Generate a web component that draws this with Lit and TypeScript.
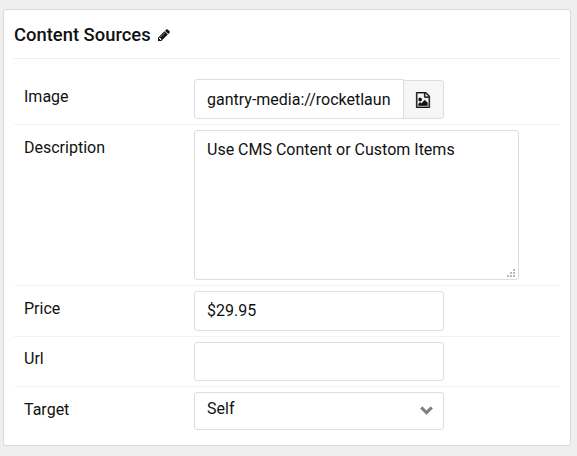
import { LitElement, html, css, svg } from "lit";
import { customElement } from "lit/decorators.js";

const pencil = svg`<path d="M491 1536l91-91-235-235-91 91v107h128v128h107zm523-928q0-22-22-22-10 0-17 7l-542 542q-7 7-7 17 0 22 22 22 10 0 17-7l542-542q7-7 7-17zm-54-192l416 416-832 832h-416v-416zm683 96q0 53-37 90l-166 166-416-416 166-165q36-38 90-38 53 0 91 38l235 234q37 39 37 91z"/>`;
const fileImage = svg`<path d="M1596 380q28 28 48 76t20 88v1152q0 40-28 68t-68 28h-1344q-40 0-68-28t-28-68v-1600q0-40 28-68t68-28h896q40 0 88 20t76 48zm-444-244v376h376q-10-29-22-41l-313-313q-12-12-41-22zm384 1528v-1024h-416q-40 0-68-28t-28-68v-416h-768v1536h1280zm-128-448v320h-1024v-192l192-192 128 128 384-384zm-832-192q-80 0-136-56t-56-136 56-136 136-56 136 56 56 136-56 136-136 56z"/>`;
const chevron = svg`<path d="M1683 808l-742 741q-19 19-45 19t-45-19l-742-741q-19-19-19-45.5t19-45.5l166-165q19-19 45-19t45 19l531 531 531-531q19-19 45-19t45 19l166 165q19 19 19 45.5t-19 45.5z"/>`;
const grip = svg`<path d="M6 0h2v2h-2zM3 3h2v2h-2zM6 3h2v2h-2zM0 6h2v2h-2zM3 6h2v2h-2zM6 6h2v2h-2z"/>`;

@customElement("app-root")
export class AppRoot extends LitElement {
  static styles = css`
    :host {
      display: block;
      box-sizing: border-box;
      height: 100vh;
      padding: 9px 6px 10px 3px;
      background: #efefef;
      color: #111;
      font: 16px/24px Roboto, sans-serif;
    }
    * { box-sizing: border-box; }
    .card {
      height: 437px;
      padding: 0 10px;
      background: #fff;
      border: 1px solid #d9d9d9;
      border-radius: 3px;
    }
    .title {
      display: flex;
      align-items: center;
      gap: 6px;
      height: 49px;
      margin: 0 0 15px;
      padding-top: 2px;
      border-bottom: 1px solid #eee;
      font-size: 18.4px;
      font-weight: 500;
    }
    svg { display: block; fill: currentColor; }
    .pencil { width: 14px; height: 14px; margin-top: -1px; }
    .row {
      display: flex;
      align-items: flex-start;
      padding: 5px 0 5px 10px;
      border-bottom: 1px solid #f2f2f2;
    }
    .row:last-child { border-bottom: 0; }
    .row label { width: 170px; padding-top: 6px; }
    .row .raised { padding-top: 5px; }
    .field {
      display: block;
      width: 250px;
      height: 40px;
      margin: 0;
      padding: 0 12px;
      border: 1px solid #ddd;
      border-radius: 3px;
      background: #fff;
      color: inherit;
      font: inherit;
      outline: 0;
    }
    .group { display: flex; align-items: flex-end; }
    .path { width: 210px; border-radius: 3px 0 0 3px; }
    .price { padding-bottom: 2px; }
    .pick {
      display: flex;
      align-items: center;
      justify-content: center;
      width: 41px;
      height: 39px;
      margin-left: -1px;
      padding: 0 2px 0 0;
      border: 1px solid #ddd;
      border-radius: 0 3px 3px 0;
      background: #f6f6f6;
      color: #111;
    }
    .pick svg { width: 16px; height: 16px; stroke: currentColor; stroke-width: 30; }
    .area-wrap { position: relative; }
    .area { width: 325px; height: 150px; padding: 7px 12px; resize: none; }
    .grip { position: absolute; right: 4px; bottom: 3px; width: 8px; height: 8px; color: #bbb; }
    .url { height: 39px; }
    .select {
      display: flex;
      align-items: center;
      justify-content: space-between;
      height: 38px;
      padding: 0 10px 4px 12px;
    }
    .select svg { width: 13px; height: 13px; margin-top: 1px; color: #808080; stroke: currentColor; stroke-width: 90; }
  `;

  render() {
    return html`
      <section class="card">
        <h4 class="title">Content Sources
          <svg class="pencil" viewBox="0 0 1792 1792">${pencil}</svg>
        </h4>
        <div class="row">
          <label>Image</label>
          <div class="group">
            <input class="field path" value="gantry-media://rocketlauncher/home/item.jpg" />
            <button class="pick" aria-label="Pick image"><svg viewBox="0 0 1792 1792">${fileImage}</svg></button>
          </div>
        </div>
        <div class="row">
          <label>Description</label>
          <div class="area-wrap">
            <textarea class="field area">Use CMS Content or Custom Items</textarea>
            <svg class="grip" viewBox="0 0 8 8">${grip}</svg>
          </div>
        </div>
        <div class="row"><label>Price</label><input class="field price" value="$29.95" /></div>
        <div class="row"><label class="raised">Url</label><input class="field url" /></div>
        <div class="row">
          <label>Target</label>
          <div class="field select"><span>Self</span><svg viewBox="0 0 1792 1792">${chevron}</svg></div>
        </div>
      </section>
    `;
  }
}
